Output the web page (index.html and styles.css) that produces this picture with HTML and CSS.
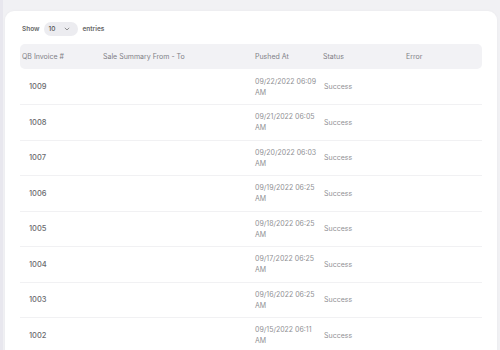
FILE: index.html
```html
<!DOCTYPE html>
<html lang="en">
<head>
  <meta charset="UTF-8" />
  <title>QB Invoices</title>
  <link rel="stylesheet" href="styles.css">
</head>
<body>

  <div class="card">
    <div class="length">
      <span>Show</span>
      <div class="select">
        <span>10</span>
        <svg width="6" height="4" viewBox="0 0 6 4"><path d="M0.8 0.8 L3 3 L5.2 0.8" fill="none" stroke="#777" stroke-width="0.8"/></svg>
      </div>
      <span>entries</span>
    </div>

    <table class="grid">
      <thead>
        <tr>
          <th class="c-inv">QB Invoice #</th>
          <th class="c-sum">Sale Summary From - To</th>
          <th class="c-at">Pushed At</th>
          <th class="c-st">Status</th>
          <th class="c-err">Error</th>
        </tr>
      </thead>
      <tbody>
        <tr><td class="num">1009</td><td></td><td><div class="date">09/22/2022 06:09 AM</div></td><td class="st">Success</td><td></td></tr>
        <tr><td class="num">1008</td><td></td><td><div class="date">09/21/2022 06:05 AM</div></td><td class="st">Success</td><td></td></tr>
        <tr><td class="num">1007</td><td></td><td><div class="date">09/20/2022 06:03 AM</div></td><td class="st">Success</td><td></td></tr>
        <tr><td class="num">1006</td><td></td><td><div class="date">09/19/2022 06:25 AM</div></td><td class="st">Success</td><td></td></tr>
        <tr><td class="num">1005</td><td></td><td><div class="date">09/18/2022 06:25 AM</div></td><td class="st">Success</td><td></td></tr>
        <tr><td class="num">1004</td><td></td><td><div class="date">09/17/2022 06:25 AM</div></td><td class="st">Success</td><td></td></tr>
        <tr><td class="num">1003</td><td></td><td><div class="date">09/16/2022 06:25 AM</div></td><td class="st">Success</td><td></td></tr>
        <tr><td class="num">1002</td><td></td><td><div class="date">09/15/2022 06:11 AM</div></td><td class="st">Success</td><td></td></tr>
      </tbody>
    </table>
  </div>

</body>
</html>
```

FILE: styles.css
```css
* {
  box-sizing: border-box;
  margin: 0;
  font-family: Inter, 'Noto Sans', sans-serif;
}

html {
  background: #e8e7ee;
}

body {
  height: 350px;
  overflow: hidden;
  margin-left: 3px;
  padding: 11px 3px 0 2px;
  background-color: #f1f1f4;
}

.card {
  background: #ffffff;
  border-radius: 9px;
  padding: 11px 15px 0;
  height: 400px;
  box-shadow: 0 0 3px rgba(0, 0, 0, 0.04);
}

.length {
  display: flex;
  align-items: center;
  gap: 4px;
  height: 14px;
  font-size: 6.5px;
  font-weight: 600;
  color: #666;
  padding-left: 2px;
}

.select {
  display: flex;
  align-items: center;
  gap: 9px;
  height: 14px;
  padding: 0 8px 0 5px;
  border-radius: 7px;
  background: #ececf0;
  font-weight: 500;
  color: #555;
}

.grid {
  margin-top: 8px;
  width: 100%;
  border-collapse: collapse;
  table-layout: fixed;
  font-size: 7px;
  color: #909094;
}

.grid th {
  height: 25px;
  background: #f2f2f5;
  text-align: left;
  font-weight: 400;
  color: #808086;
  padding: 0;
}

.grid th:first-child {
  border-radius: 5px 0 0 5px;
  padding-left: 2px;
}

.grid th:last-child {
  border-radius: 0 5px 5px 0;
}

.c-inv { width: 83px; }
.c-sum { width: 152px; }
.c-at { width: 68px; }
.c-st { width: 83px; }

.grid td {
  height: 35.5px;
  padding: 0;
  border-bottom: 1px solid #f1f1f3;
  vertical-align: middle;
}

.grid td.num {
  padding-left: 9px;
  font-size: 7.5px;
  font-weight: 500;
  color: #6a6a6e;
}

.grid td.st {
  padding-left: 1px;
}

.date {
  width: 62px;
  line-height: 11px;
}
```
